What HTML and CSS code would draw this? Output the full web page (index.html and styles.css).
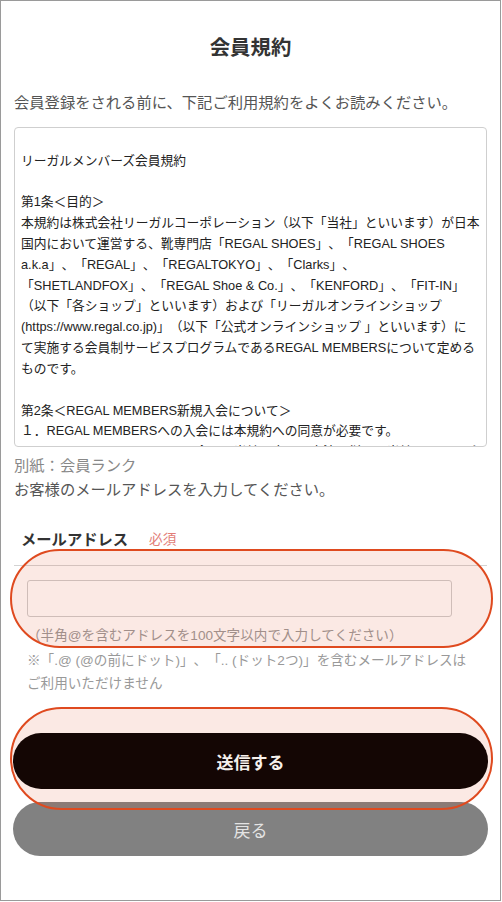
FILE: index.html
```html
<!DOCTYPE html>
<html lang="ja">
<head>
    <meta charset="UTF-8">
    <meta name="viewport" content="width=device-width, initial-scale=1.0">
    <link rel="stylesheet" href="styles.css">
    <title>会員規約</title>
</head>
<body>
    <main class="page">
        <h1 class="title">会員規約</h1>
        <p class="lead">会員登録をされる前に、下記ご利用規約をよくお読みください。</p>

        <div class="terms">
            リーガルメンバーズ会員規約<br>
            <br>
            第1条＜目的＞<br>
            本規約は株式会社リーガルコーポレーション（以下「当社」といいます）が日本<br>
            国内において運営する、靴専門店「REGAL SHOES」、「REGAL SHOES<br>
            a.k.a」、「REGAL」、「REGALTOKYO」、「Clarks」、<br>
            「SHETLANDFOX」、「REGAL Shoe &amp; Co.」、「KENFORD」、「FIT-IN」<br>
            （以下「各ショップ」といいます）および「リーガルオンラインショップ<br>
            (https://www.regal.co.jp)」（以下「公式オンラインショップ 」といいます）に<br>
            て実施する会員制サービスプログラムであるREGAL MEMBERSについて定める<br>
            ものです。<br>
            <br>
            第2条＜REGAL MEMBERS新規入会について＞<br>
            １．REGAL MEMBERSへの入会には本規約への同意が必要です。<br>
            ２．REGAL MEMBERSへの入会は、当社の定める方法に従い、当社のショップにて
        </div>

        <p class="appendix">別紙：会員ランク</p>
        <p class="lead">お客様のメールアドレスを入力してください。</p>

        <div class="field">
            <div class="field-head">
                <label class="field-label" for="mail">メールアドレス</label>
                <span class="required">必須</span>
            </div>
            <input class="field-input" type="email" id="mail">
            <p class="hint">（半角@を含むアドレスを100文字以内で入力してください）</p>
            <p class="note">※「.@ (@の前にドット)」、「.. (ドット2つ)」を含むメールアドレスは<br>ご利用いただけません</p>
            <span class="mark mark-field"></span>
        </div>

        <div class="actions">
            <button class="btn btn-submit">送信する</button>
            <button class="btn btn-back">戻る</button>
            <span class="mark mark-actions"></span>
        </div>
    </main>
</body>
</html>
```

FILE: styles.css
```css
*{
    margin: 0;
    padding: 0;
    box-sizing: border-box;
}
body{
    background-color: #fff;
    font-family: "Liberation Sans", "Noto Sans CJK JP", sans-serif;
    color: #333;
    text-spacing-trim: space-all;
}
.page{
    width: 501px;
    height: 901px;
    border: 1px solid #9a9a9a;
    padding: 33px 13px 0;
}
.title{
    font-size: 20.4px;
    line-height: 28px;
    font-weight: bold;
    text-align: center;
    color: #333;
}
.lead{
    font-size: 15.3px;
    line-height: 24px;
    color: #555;
}
.title + .lead{
    margin-top: 29px;
}

/* 規約テキスト */
.terms{
    margin-top: 12px;
    height: 320px;
    border: 1px solid #cfcfcf;
    border-radius: 4px;
    padding: 22.5px 6px 0;
    font-size: 12.75px;
    line-height: 20.85px;
    color: #222;
    white-space: nowrap;
    overflow: hidden;
}
.appendix{
    margin-top: 7px;
    font-size: 15.3px;
    line-height: 24px;
    color: #888;
}

/* 入力欄 */
.field{
    position: relative;
    margin-top: 26px;
}
.field-head{
    display: flex;
    align-items: center;
    gap: 21px;
    padding: 0 7px 13px;
    line-height: 24px;
    border-bottom: 1px solid #d3d3d3;
}
.field-label{
    font-size: 15.3px;
    font-weight: bold;
    color: #333;
}
.required{
    font-size: 13.6px;
    color: #e27d78;
}
.field-input{
    display: block;
    margin: 14px 0 0 13px;
    width: 425px;
    height: 37px;
    border: 1px solid #cdcdcd;
    border-radius: 3px;
    background-color: #fff;
}
.field-input:focus{
    outline: none;
}
.hint{
    margin: 8px 0 0 13px;
    font-size: 13.6px;
    line-height: 22px;
    color: #999;
}
.note{
    margin: 2px 0 0 13px;
    font-size: 13.6px;
    line-height: 23px;
    color: #999;
    white-space: nowrap;
}

/* ボタン */
.actions{
    position: relative;
    margin-top: 38px;
}
.btn{
    display: flex;
    align-items: center;
    justify-content: center;
    width: 475px;
    margin: 0 -1px;
    border: none;
    border-radius: 999px;
    font-family: inherit;
    font-size: 17px;
    cursor: pointer;
}
.btn-submit{
    position: relative;
    z-index: 2;
    height: 56px;
    background-color: #140604;
    color: #f6f0ec;
    font-weight: bold;
}
.btn-back{
    height: 54px;
    margin-top: 13px;
    background-color: #818181;
    color: #e4e4e4;
}

/* 注釈マーク */
.mark{
    position: absolute;
    z-index: 1;
    left: -4px;
    width: 483px;
    border: 2px solid #df4a1f;
    border-radius: 999px;
    background-color: rgba(224, 70, 30, 0.12);
    pointer-events: none;
}
.mark-field{
    top: 21px;
    height: 99px;
}
.mark-actions{
    top: -26px;
    height: 103px;
}
```
